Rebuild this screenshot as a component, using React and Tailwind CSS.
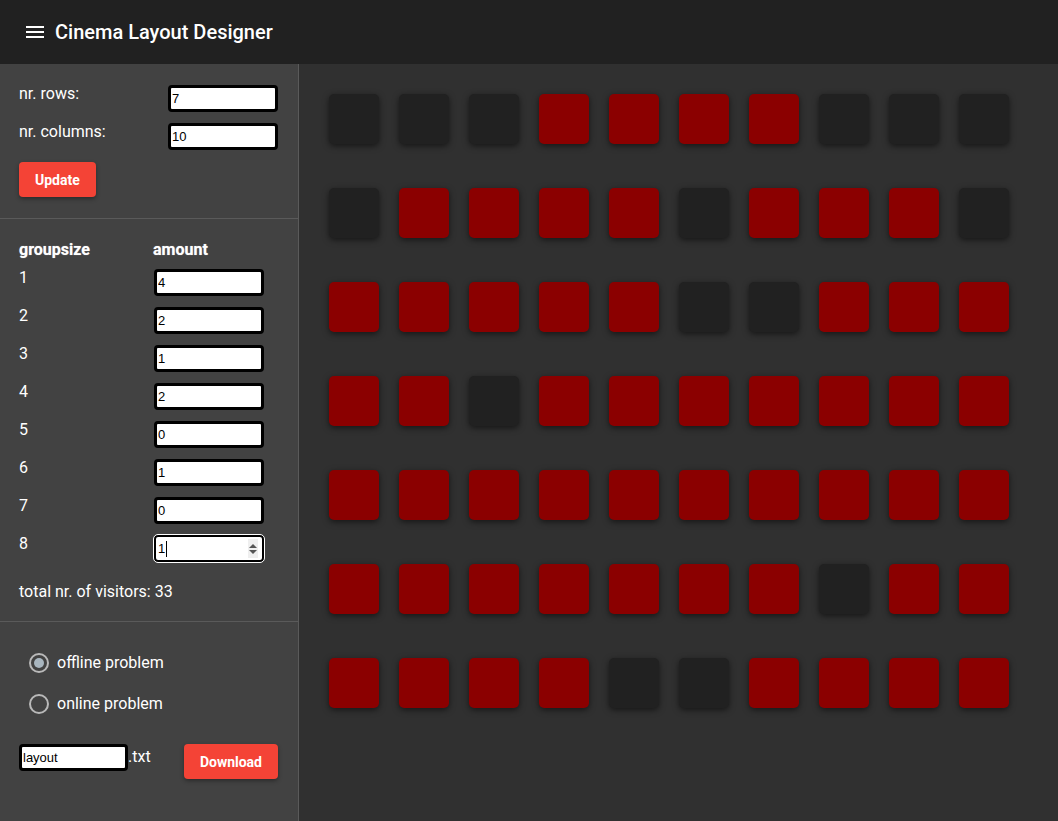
import { useState } from "react";

// 1 = taken (red), 0 = free (dark)
const LAYOUT = [
    [0, 0, 0, 1, 1, 1, 1, 0, 0, 0],
    [0, 1, 1, 1, 1, 0, 1, 1, 1, 0],
    [1, 1, 1, 1, 1, 0, 0, 1, 1, 1],
    [1, 1, 0, 1, 1, 1, 1, 1, 1, 1],
    [1, 1, 1, 1, 1, 1, 1, 1, 1, 1],
    [1, 1, 1, 1, 1, 1, 1, 0, 1, 1],
    [1, 1, 1, 1, 0, 0, 1, 1, 1, 1],
];

const GROUPS = [4, 2, 1, 2, 0, 1, 0, 1];

const inputClass =
    "h-[27px] w-[110px] rounded-[4px] border-[3px] border-black bg-white px-[1px] text-[13px] text-black font-['Liberation_Sans',Arial,sans-serif] outline-none";

function MenuIcon() {
    return (
        <svg width="24" height="24" viewBox="0 0 24 24" fill="white">
            <path d="M3 18h18v-2H3v2zm0-5h18v-2H3v2zm0-7v2h18V6H3z" />
        </svg>
    );
}

function Radio({ checked, label }) {
    return (
        <div className="flex h-6 items-center gap-2">
            <span className="flex h-5 w-5 items-center justify-center rounded-full border-2 border-[#b9b9b9]">
                {checked && <span className="h-[10px] w-[10px] rounded-full bg-[#a9b6bf]" />}
            </span>
            <span className="text-base text-white">{label}</span>
        </div>
    );
}

function Sidebar() {
    const [rows, setRows] = useState("7");
    const [cols, setCols] = useState("10");
    const [fileName, setFileName] = useState("layout");

    return (
        <aside className="w-[299px] shrink-0 border-r border-[#5a5a5a] bg-[#424242] text-white">
            {/* rows / columns */}
            <div className="border-b border-[#5a5a5a] pl-[19px] pt-[18px] pb-[21px]">
                <div className="flex flex-col gap-[9px]">
                    <div className="flex h-[29px] items-start">
                        <span className="w-[149px] text-base leading-6">nr. rows:</span>
                        <input className={`mt-[3px] ${inputClass}`} value={rows} onChange={(e) => setRows(e.target.value)} />
                    </div>
                    <div className="flex h-[29px] items-start">
                        <span className="w-[149px] text-base leading-6">nr. columns:</span>
                        <input className={`mt-[3px] ${inputClass}`} value={cols} onChange={(e) => setCols(e.target.value)} />
                    </div>
                </div>
                <button className="mt-[13px] h-[35px] rounded-[4px] bg-[#f44336] px-4 text-sm font-bold text-white shadow-[0_2px_4px_rgba(0,0,0,0.35)]">
                    Update
                </button>
            </div>

            {/* group sizes */}
            <div className="border-b border-[#5a5a5a] pl-[19px] pt-[19px] pb-[17px]">
                <div className="flex text-base font-bold leading-6 [text-shadow:0_0_1px_rgba(255,255,255,0.6)]">
                    <span className="w-[134px]">groupsize</span>
                    <span>amount</span>
                </div>
                <div className="mt-[4px] flex flex-col gap-[9px]">
                    {GROUPS.map((amount, i) => (
                        <div key={i} className="flex h-[29px] items-start">
                            <span className="w-[135px] text-base leading-6">{i + 1}</span>
                            {i === GROUPS.length - 1 ? (
                                <div className="relative mt-[3px]">
                                    <input
                                        className="h-[27px] w-[110px] rounded-[4px] border-2 border-black bg-white px-[2px] text-[13px] text-black font-['Liberation_Sans',Arial,sans-serif] outline outline-1 outline-offset-0 outline-white"
                                        defaultValue={amount}
                                    />
                                    <span className="absolute left-[12px] top-[6px] h-[16px] w-[1px] bg-black" />
                                    <span className="absolute right-[6px] top-[4px] flex h-[19px] w-[10px] flex-col items-center justify-center gap-[2px] bg-[#efefef]">
                                        <span className="h-0 w-0 border-x-[4px] border-b-[4px] border-x-transparent border-b-[#555]" />
                                        <span className="h-0 w-0 border-x-[4px] border-t-[4px] border-x-transparent border-t-[#555]" />
                                    </span>
                                </div>
                            ) : (
                                <input className={`mt-[3px] ${inputClass}`} defaultValue={amount} />
                            )}
                        </div>
                    ))}
                </div>
                <p className="mt-[19px] text-base leading-6">total nr. of visitors: 33</p>
            </div>

            {/* problem type + download */}
            <div className="pl-[19px] pr-[20px] pt-[29px]">
                <div className="ml-[10px] flex flex-col gap-[17px]">
                    <Radio checked label="offline problem" />
                    <Radio label="online problem" />
                </div>
                <div className="mt-[28px] flex items-start justify-between">
                    <div className="flex items-start">
                        <input
                            className="h-[27px] w-[109px] rounded-[4px] border-[3px] border-black bg-white px-[1px] text-[13px] text-black font-['Liberation_Sans',Arial,sans-serif] outline-none"
                            value={fileName}
                            onChange={(e) => setFileName(e.target.value)}
                        />
                        <span className="mt-[1px] text-base leading-6">.txt</span>
                    </div>
                    <button className="h-[35px] rounded-[4px] bg-[#f44336] px-4 text-sm font-bold text-white shadow-[0_2px_4px_rgba(0,0,0,0.35)]">
                        Download
                    </button>
                </div>
            </div>
        </aside>
    );
}

function SeatGrid() {
    return (
        <main className="flex-1 bg-[#303030] pl-[30px] pt-[30px]">
            <div className="grid grid-cols-[repeat(10,50px)] gap-x-5 gap-y-[44px]">
                {LAYOUT.flat().map((taken, index) => (
                    <div
                        key={index}
                        className={`h-[50px] w-[50px] rounded-[5px] shadow-[0_2px_6px_rgba(0,0,0,0.55)] ${
                            taken ? "bg-[#8b0000]" : "bg-[#212121]"
                        }`}
                    />
                ))}
            </div>
        </main>
    );
}

export default function App() {
    return (
        <div className="flex h-screen flex-col overflow-hidden font-['Roboto',sans-serif]">
            <header className="flex h-16 shrink-0 items-center gap-2 bg-[#212121] px-[23px]">
                <MenuIcon />
                <h1 className="text-xl font-medium text-white">Cinema Layout Designer</h1>
            </header>
            <div className="flex flex-1">
                <Sidebar />
                <SeatGrid />
            </div>
        </div>
    );
}
